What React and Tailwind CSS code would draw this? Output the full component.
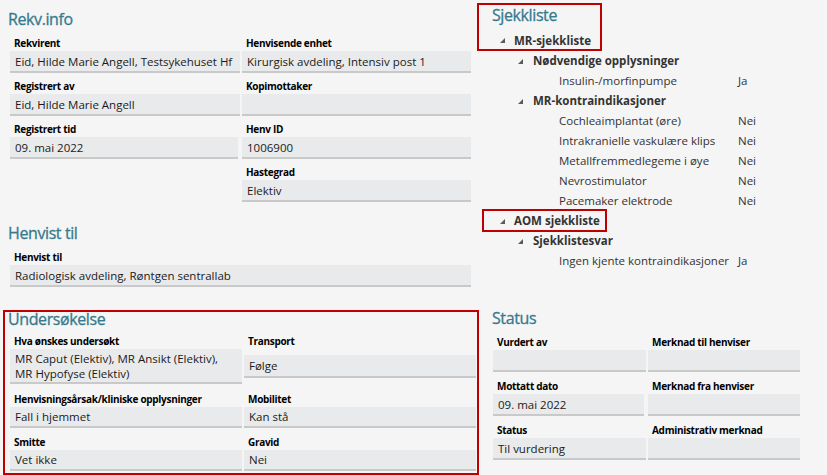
import React from "react";

function Tri() {
  return (
    <svg width="5" height="5" viewBox="0 0 5 5" className="shrink-0">
      <polygon points="5,0 5,5 0,5" fill="#5a5a5a" />
    </svg>
  );
}

function Label({ children }) {
  return (
    <div className="h-[15px] whitespace-nowrap pl-[4px] text-[10px] font-bold leading-[15px] tracking-[-0.3px] text-black">
      {children}
    </div>
  );
}

function Val({ children, className = "h-[22px]" }) {
  return (
    <div
      className={
        "flex items-center border-b-2 border-[#c9c9c9] bg-[#e9eaeb] pl-[5px] text-[11.5px] leading-[15px] text-[#1a1a1a] " +
        className
      }
    >
      {children}
    </div>
  );
}

function Item({ label, value, className = "mt-[6px]", valClass }) {
  return (
    <div className={className}>
      <Label>{label}</Label>
      <Val className={valClass}>{value}</Val>
    </div>
  );
}

function Heading({ children, className = "" }) {
  return (
    <div
      className={
        "text-[16px] tracking-[-0.4px] text-[#367a8e] [-webkit-text-stroke:0.3px_#367a8e] " +
        className
      }
    >
      {children}
    </div>
  );
}

function TreeGroup({ label, level }) {
  return (
    <div
      className={
        "flex h-[20px] items-center text-[11.5px] font-bold text-[#333333] " +
        (level === 1 ? "pl-[21px]" : "pl-[39px]")
      }
    >
      <Tri />
      <span className={level === 1 ? "ml-[9px]" : "ml-[10px]"}>{label}</span>
    </div>
  );
}

function TreeLeaf({ label, value }) {
  return (
    <div className="grid h-[20px] grid-cols-[179px_auto] items-center pl-[80px] text-[11.5px] text-[#333333]">
      <span className="whitespace-nowrap">{label}</span>
      <span>{value}</span>
    </div>
  );
}

export default function App() {
  return (
    <div className="grid h-[475px] w-[827px] grid-cols-[479px_348px] grid-rows-[310px_165px] overflow-hidden bg-[#f5f5f5] font-['Open_Sans',sans-serif]">
      {/* Top left */}
      <div className="flex flex-col">
        <Heading className="pl-[8px] pt-[8px] leading-[22px]">Rekv.info</Heading>
        <div className="ml-[10px] grid w-[461px] grid-cols-[230px_229px] gap-x-[2px]">
          <Item label="Rekvirent" value="Eid, Hilde Marie Angell, Testsykehuset Hf" />
          <Item label="Henvisende enhet" value="Kirurgisk avdeling, Intensiv post 1" />
          <Item label="Registrert av" value="Eid, Hilde Marie Angell" />
          <Item label="Kopimottaker" value="" />
          <Item label="Registrert tid" value="09. mai 2022" valClass="h-[22px] w-[228px]" />
          <Item label="Henv ID" value="1006900" />
          <Item label="Hastegrad" value="Elektiv" className="col-start-2 mt-[6px]" />
        </div>
        <Heading className="pl-[8px] pt-[20px] pb-[6px] leading-[22px]">Henvist til</Heading>
        <div className="ml-[10px] w-[461px]">
          <Label>Henvist til</Label>
          <Val>Radiologisk avdeling, Røntgen sentrallab</Val>
        </div>
      </div>

      {/* Top right: Sjekkliste */}
      <div className="flex flex-col">
        <div className="ml-[-2px] mt-[3px] h-[48px] w-[125px] border-2 border-[#c00000]">
          <Heading className="h-[27px] pl-[13px] text-[16.5px] leading-[20px]">Sjekkliste</Heading>
          <div className="flex h-[17px] items-center pl-[21px] text-[11.5px] font-bold text-[#333333]">
            <Tri />
            <span className="ml-[9px]">MR-sjekkliste</span>
          </div>
        </div>
        <TreeGroup level={2} label="Nødvendige opplysninger" />
        <TreeLeaf label="Insulin-/morfinpumpe" value="Ja" />
        <TreeGroup level={2} label="MR-kontraindikasjoner" />
        <TreeLeaf label="Cochleaimplantat (øre)" value="Nei" />
        <TreeLeaf label="Intrakranielle vaskulære klips" value="Nei" />
        <TreeLeaf label="Metallfremmedlegeme i øye" value="Nei" />
        <TreeLeaf label="Nevrostimulator" value="Nei" />
        <TreeLeaf label="Pacemaker elektrode" value="Nei" />
        <div className="relative">
          <TreeGroup level={1} label="AOM sjekkliste" />
          <div className="pointer-events-none absolute left-[3px] top-[-2px] h-[23px] w-[125px] border-2 border-[#c00000]" />
        </div>
        <TreeGroup level={2} label="Sjekklistesvar" />
        <TreeLeaf label="Ingen kjente kontraindikasjoner" value="Ja" />
      </div>

      {/* Bottom left: Undersøkelse */}
      <div className="ml-[3px] h-[165px] w-[476px] border-2 border-[#c00000]">
        <Heading className="mt-[-1px] h-[16px] pl-[3px] leading-[16px]">Undersøkelse</Heading>
        <div className="ml-[5px] grid grid-cols-[232px_232px] gap-x-[2px]">
          <div className="mt-[7px] flex flex-col">
            <Label>Hva ønskes undersøkt</Label>
            <Val className="h-[35px]">
              <span>
                MR Caput (Elektiv), MR Ansikt (Elektiv),
                <br />
                MR Hypofyse (Elektiv)
              </span>
            </Val>
          </div>
          <div className="mt-[7px] flex flex-col">
            <Label>Transport</Label>
            <div className="flex flex-1 flex-col justify-center">
              <Val className="h-[23px]">Følge</Val>
            </div>
          </div>
          <Item className="mt-[8px]" label="Henvisningsårsak/kliniske opplysninger" value="Fall i hjemmet" valClass="h-[21px]" />
          <Item className="mt-[8px]" label="Mobilitet" value="Kan stå" valClass="h-[21px]" />
          <Item className="mt-[7px]" label="Smitte" value="Vet ikke" valClass="h-[21px]" />
          <Item className="mt-[7px]" label="Gravid" value="Nei" valClass="h-[21px]" />
        </div>
      </div>

      {/* Bottom right: Status */}
      <div className="flex flex-col">
        <Heading className="h-[16px] pl-[13px] leading-[16px]">Status</Heading>
        <div className="ml-[14px] grid grid-cols-[153px_152px] gap-x-[2px]">
          <Item className="mt-[9px]" label="Vurdert av" value="" />
          <Item className="mt-[9px]" label="Merknad til henviser" value="" />
          <Item className="mt-[7px]" label="Mottatt dato" value="09. mai 2022" valClass="h-[22px] w-[151px]" />
          <Item className="mt-[7px]" label="Merknad fra henviser" value="" />
          <Item className="mt-[7px]" label="Status" value="Til vurdering" />
          <Item className="mt-[7px]" label="Administrativ merknad" value="" />
        </div>
      </div>
    </div>
  );
}
